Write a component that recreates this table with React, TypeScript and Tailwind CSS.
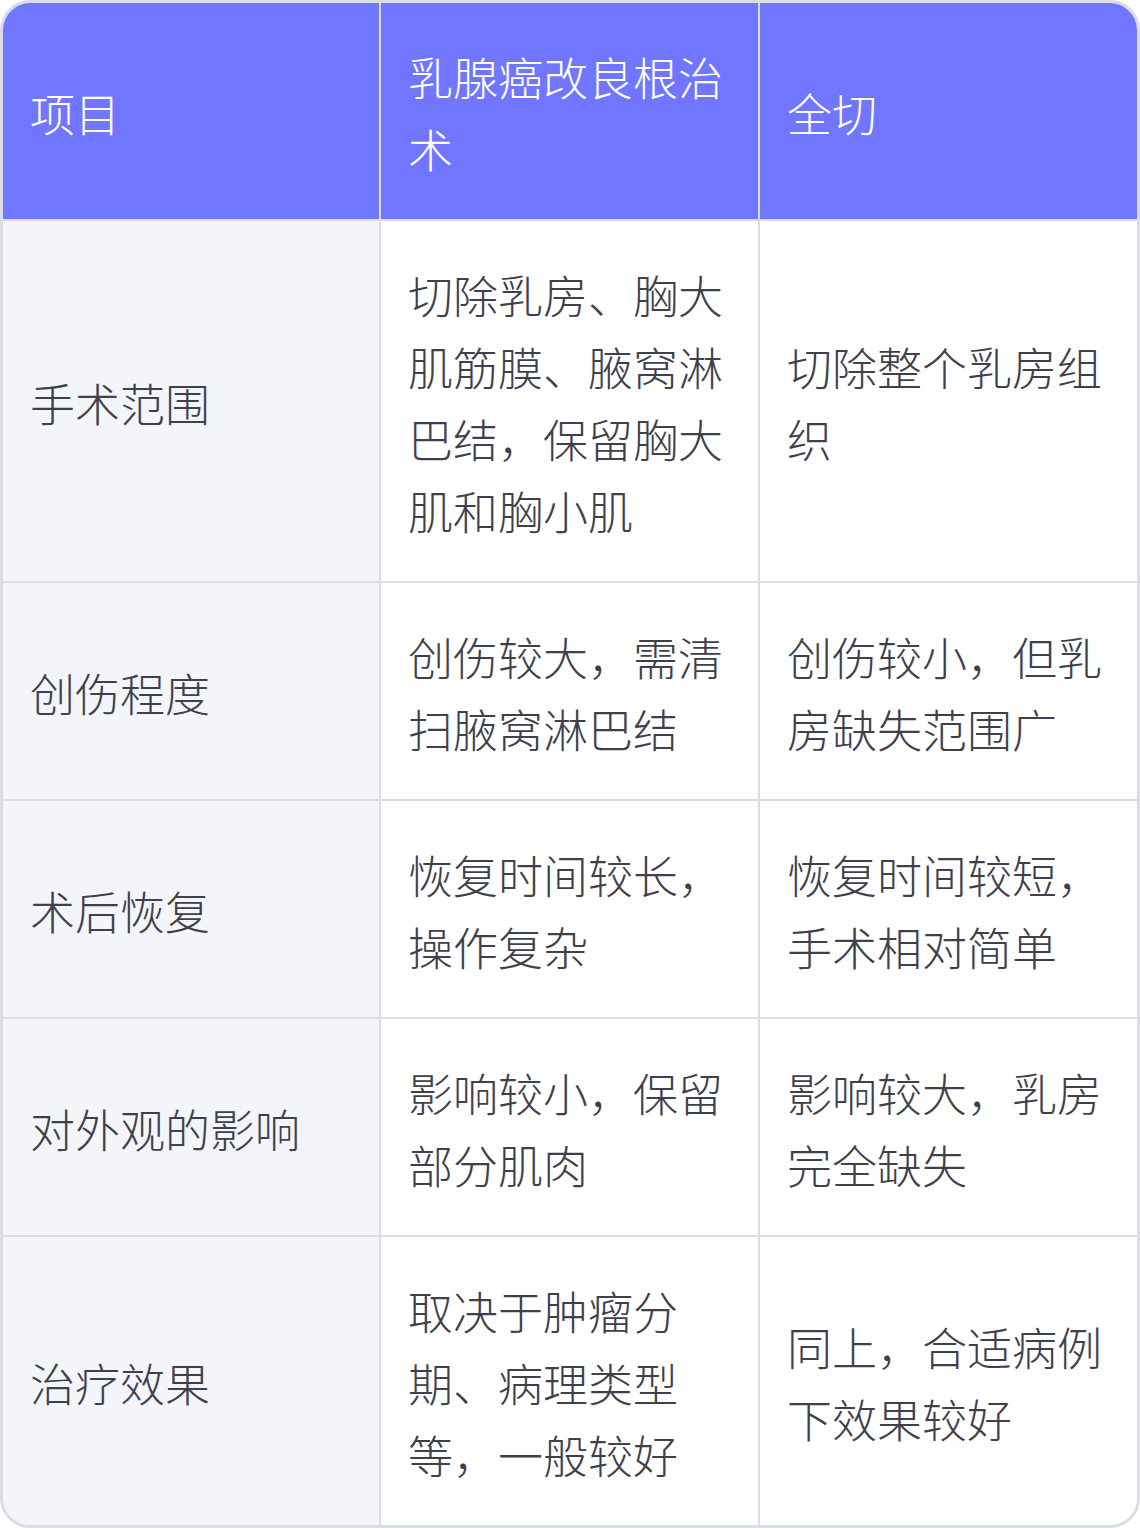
import React from 'react';

const header = ['项目', '乳腺癌改良根治术', '全切'];

const rows: string[][] = [
  ['手术范围', '切除乳房、胸大肌筋膜、腋窝淋巴结，保留胸大肌和胸小肌', '切除整个乳房组织'],
  ['创伤程度', '创伤较大，需清扫腋窝淋巴结', '创伤较小，但乳房缺失范围广'],
  ['术后恢复', '恢复时间较长，操作复杂', '恢复时间较短，手术相对简单'],
  ['对外观的影响', '影响较小，保留部分肌肉', '影响较大，乳房完全缺失'],
  ['治疗效果', '取决于肿瘤分期、病理类型等，一般较好', '同上，合适病例下效果较好'],
];

const App = (): React.JSX.Element => {
  return (
    <div
      className="w-[1140px] bg-white"
      style={{ fontFamily: '"Noto Sans CJK SC", "Noto Sans", sans-serif' }}
    >
      <div className="overflow-hidden rounded-[30px] border-[3px] border-[#dcdde3]">
        <div className="grid grid-cols-[378px_379px_1fr] bg-[#7076ff] border-b-2 border-[#dcdde3]">
          {header.map((h, i) => (
            <div
              key={h}
              className={`flex items-center pl-[27px] pr-7 pt-[38px] pb-[34px] text-[45px] leading-[72px] font-light text-white ${i < 2 ? 'border-r-2 border-[#dcdde3]' : ''}`}
            >
              <span>{h}</span>
            </div>
          ))}
        </div>
        {rows.map((row, r) => (
          <div
            key={row[0]}
            className={`grid grid-cols-[378px_379px_1fr] ${r < rows.length - 1 ? 'border-b-2 border-[#dcdde3]' : ''}`}
          >
            {row.map((cell, i) => (
              <div
                key={i}
                className={`flex items-center pl-[27px] pr-7 pt-[38px] pb-[34px] text-[45px] leading-[72px] font-light text-[#3e404b] ${i === 0 ? 'bg-[#f4f5f9]' : 'bg-white'} ${i < 2 ? 'border-r-2 border-[#dcdde3]' : ''}`}
              >
                <span>{cell}</span>
              </div>
            ))}
          </div>
        ))}
      </div>
    </div>
  );
};

export default App;
